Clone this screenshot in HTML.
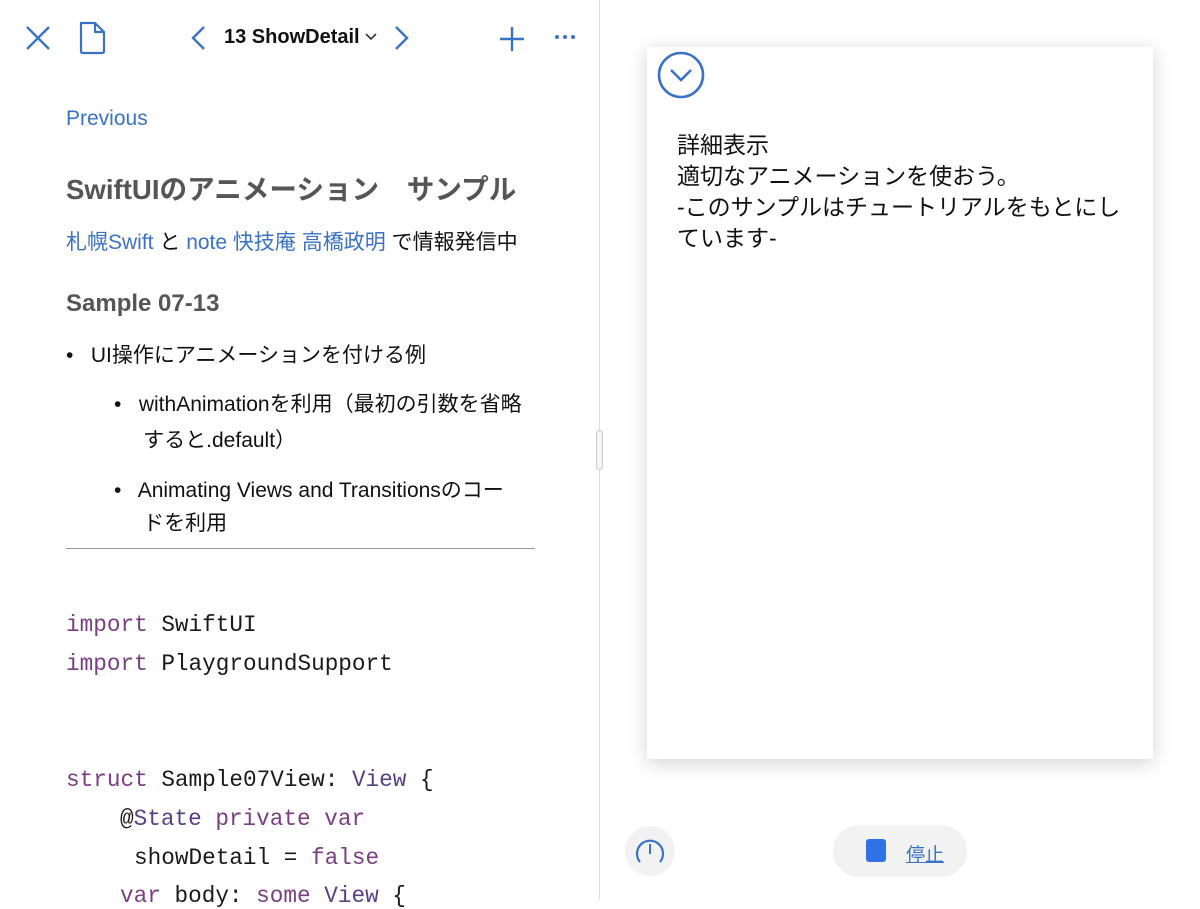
<!DOCTYPE html>
<html><head><meta charset="utf-8"><style>
*{margin:0;padding:0;box-sizing:border-box}
body{width:1200px;height:900px;overflow:hidden;background:#fff;position:relative;font-family:"Liberation Sans","Noto Sans CJK JP",sans-serif;color:#111}
.a{position:absolute;white-space:nowrap}
.blue{color:#3a73c6}
.code{font-family:"Liberation Mono","Noto Sans CJK JP",monospace;font-size:22.7px;color:#1a1a1a}
.k{color:#7a3e82}
.t{color:#5a3f86}
</style></head><body>
<div class="a" style="left:599px;top:0;width:1px;height:900px;background:#e0e0e0"></div>
<div class="a" style="left:596px;top:430px;width:7px;height:40px;border:1px solid #ccc;border-radius:4px;background:#f6f6f6"></div>
<svg class="a" style="left:24px;top:24px" width="28" height="28" viewBox="0 0 28 28"><path d="M3 3L25 25M25 3L3 25" stroke="#3a73c6" stroke-width="2.4" fill="none"/></svg>
<svg class="a" style="left:76px;top:20px" width="32" height="36" viewBox="0 0 32 36"><path d="M5 3H19L28 12V31Q28 33 26 33H7Q5 33 5 31Z M19 3V12H28" stroke="#3a73c6" stroke-width="2.2" fill="none" stroke-linejoin="round"/></svg>
<svg class="a" style="left:188px;top:25px" width="20" height="26"><path d="M16 2L5 13L16 24" stroke="#3a73c6" stroke-width="2.4" fill="none"/></svg>
<div class="a" style="left:224px;top:26px;font-size:20px;font-weight:bold;color:#111">13 ShowDetail</div>
<svg class="a" style="left:364px;top:32px" width="14" height="10"><path d="M2 2L7 7L12 2" stroke="#333" stroke-width="1.6" fill="none"/></svg>
<svg class="a" style="left:392px;top:25px" width="20" height="26"><path d="M4 2L15 13L4 24" stroke="#3a73c6" stroke-width="2.4" fill="none"/></svg>
<svg class="a" style="left:498px;top:25px" width="28" height="28"><path d="M14 2V26M2 14H26" stroke="#3a73c6" stroke-width="2.4"/></svg>
<svg class="a" style="left:554px;top:34px" width="22" height="6"><circle cx="3" cy="3" r="2" fill="#3a73c6"/><circle cx="11" cy="3" r="2" fill="#3a73c6"/><circle cx="19" cy="3" r="2" fill="#3a73c6"/></svg>

<div class="a blue" style="left:66px;top:107px;font-size:21px">Previous</div>
<div class="a" style="left:66px;top:167px;font-size:27.6px;font-weight:bold;color:#555">SwiftUIのアニメーション　サンプル</div>
<div class="a" style="left:66px;top:226px;font-size:21px"><span class="blue">札幌Swift</span> と <span class="blue">note 快技庵 高橋政明</span> で情報発信中</div>
<div class="a" style="left:66px;top:290px;font-size:24px;font-weight:bold;color:#555">Sample 07-13</div>
<div class="a" style="left:66px;top:339px;font-size:21px">•&nbsp;&nbsp; UI操作にアニメーションを付ける例</div>
<div class="a" style="left:114px;top:387px;font-size:21px;line-height:36px">•&nbsp;&nbsp; withAnimationを利用（最初の引数を省略<br>&nbsp;&nbsp;&nbsp;&nbsp;&nbsp;すると.default）</div>
<div class="a" style="left:114px;top:474px;font-size:21px;line-height:33px">•&nbsp;&nbsp; Animating Views and Transitionsのコー<br>&nbsp;&nbsp;&nbsp;&nbsp;&nbsp;ドを利用</div>
<div class="a" style="left:66px;top:548px;width:469px;height:1px;background:#999"></div>

<div class="a code" style="left:66px;top:612px"><span class="k">import</span> SwiftUI</div>
<div class="a code" style="left:66px;top:651px"><span class="k">import</span> PlaygroundSupport</div>
<div class="a code" style="left:66px;top:767px"><span class="k">struct</span> Sample07View: <span class="t">View</span> {</div>
<div class="a code" style="left:120px;top:806px">@<span class="t">State</span> <span class="k">private var</span></div>
<div class="a code" style="left:134px;top:845px">showDetail = <span class="k">false</span></div>
<div class="a code" style="left:120px;top:883px"><span class="k">var</span> body: <span class="k">some</span> <span class="t">View</span> {</div>

<div class="a" style="left:647px;top:47px;width:506px;height:712px;background:#fff;box-shadow:0 4px 18px rgba(0,0,0,0.18)"></div>
<svg class="a" style="left:656px;top:50px" width="50" height="50"><circle cx="25" cy="25" r="22" stroke="#3a73c6" stroke-width="2.6" fill="none"/><path d="M15 20L25 30L35 20" stroke="#3a73c6" stroke-width="2.6" fill="none"/></svg>
<div class="a" style="left:677px;top:130px;font-size:23px;line-height:31px;color:#111">詳細表示<br>適切なアニメーションを使おう。<br>-このサンプルはチュートリアルをもとにし<br>ています-</div>

<div class="a" style="left:625px;top:826px;width:50px;height:50px;border-radius:25px;background:#f2f2f2"></div>
<svg class="a" style="left:632px;top:834px" width="36" height="34"><path d="M8 28A13 13 0 1 1 28 28" stroke="#3a73c6" stroke-width="2.2" fill="none"/><path d="M18 10V20" stroke="#3a73c6" stroke-width="2"/></svg>
<div class="a" style="left:833px;top:825px;width:134px;height:52px;border-radius:26px;background:#f2f2f2"></div>
<div class="a" style="left:866px;top:839px;width:20px;height:23px;border-radius:3px;background:#2f72e8"></div>
<div class="a" style="left:906px;top:840px;font-size:19px;color:#3a73c6;text-decoration:underline">停止</div>
</body></html>
